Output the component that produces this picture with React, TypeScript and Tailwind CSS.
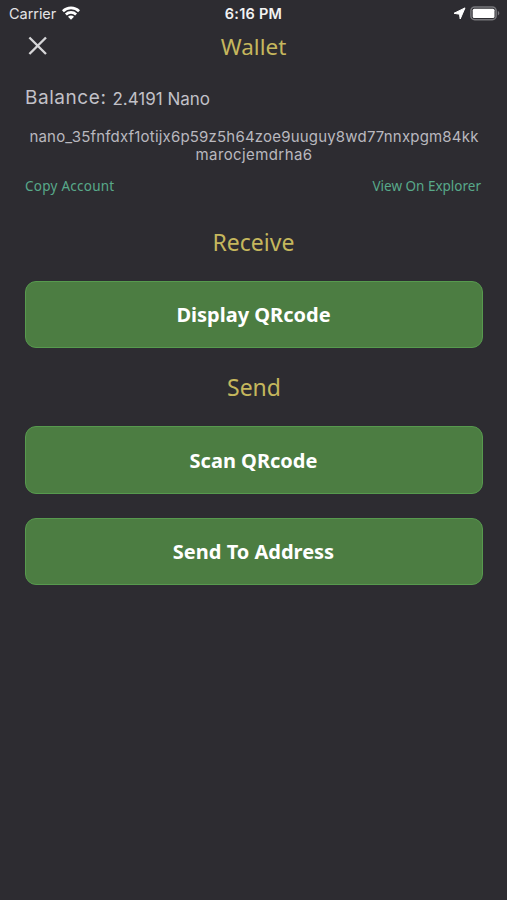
import { useState } from "react";

interface Account {
  balance: string;
  addressLines: string[];
}

const account: Account = {
  balance: "2.4191 Nano",
  addressLines: [
    "nano_35fnfdxf1otijx6p59z5h64zoe9uuguy8wd77nnxpgm84kk",
    "marocjemdrha6",
  ],
};

function StatusBar() {
  return (
    <div className="grid h-7 grid-cols-3 items-center pl-[9px] pr-[7px] font-['Inter',sans-serif] text-[14.5px] leading-7 text-[#e4e4e6]">
      <div className="flex items-center gap-[6px]">
        <span className="tracking-[-0.05px]">Carrier</span>
        <svg className="-mt-[2px]" width="18" height="14" viewBox="0 0 18 14" fill="none" stroke="#fff" strokeWidth="2.7">
          <path d="M.9 5.2a11.5 11.5 0 0 1 16.2 0" />
          <path d="M3.9 8.5a7.3 7.3 0 0 1 10.2 0" />
          <path d="M9 13.8 6 10.8a4.2 4.2 0 0 1 6 0Z" fill="#fff" stroke="none" />
        </svg>
      </div>
      <span className="-ml-[2px] text-center font-semibold tracking-[0.25px] text-[#f2f2f3]">6:16 PM</span>
      <div className="flex items-center justify-end gap-1">
        <svg className="-mt-px" width="13" height="13" viewBox="0 0 13 13" fill="#fff" stroke="#fff" strokeWidth="1" strokeLinejoin="round">
          <path d="M12 .9 7.2 12 6.5 7.2 1 6.3Z" />
        </svg>
        <svg className="-mt-[2px]" width="30" height="15" viewBox="0 0 30 15" fill="none">
          <rect x=".9" y=".9" width="25.2" height="12.8" rx="3.8" stroke="#77777b" strokeWidth="1.5" />
          <rect x="2.7" y="2.7" width="21.8" height="9.2" rx="1.5" fill="#fff" />
          <path d="M27.8 5.1c2 .7 2 3.7 0 4.4Z" fill="#77777b" />
        </svg>
      </div>
    </div>
  );
}

function SectionTitle({ children }: { children: string }) {
  return (
    <h2 className="text-center font-['Noto_Sans',sans-serif] text-[23px] leading-[31px] text-[#c5b75d]">
      {children}
    </h2>
  );
}

function ActionButton({ label }: { label: string }) {
  return (
    <button className="h-[67.5px] w-full rounded-[11px] border border-[#579a4e] bg-[#4c7d42] pt-[2px] pr-px font-['Noto_Sans',sans-serif] text-[20px] font-bold text-white">
      {label}
    </button>
  );
}

export default function App() {
  const [copied, setCopied] = useState(false);

  const handleCopy = () => {
    navigator.clipboard?.writeText(account.addressLines.join(""));
    setCopied(true);
  };

  return (
    <div className="min-h-screen bg-[#2d2c31]">
      <StatusBar />

      <header className="grid h-9 grid-cols-[24px_1fr_24px] items-center px-[26px]">
        <button aria-label="Close">
          <svg width="24" height="24" viewBox="0 0 24 24" stroke="#d6d6d8" strokeWidth="2.4">
            <path d="M3.4 3.5 20 20M20 3.5 3.4 20" />
          </svg>
        </button>
        <h1 className="pt-[2px] text-center font-['Noto_Sans',sans-serif] text-[22.5px] leading-8 text-[#c5b75d]">
          Wallet
        </h1>
      </header>

      <main className="pl-[25px] pr-6">
        {/* Balance */}
        <div className="flex items-end gap-[6px] pt-5 font-['Inter',sans-serif] text-[#c2c1c8]">
          <span className="text-[19px] leading-7 tracking-[0.55px]">Balance:</span>
          <span className="text-[17px] leading-[26px]">{account.balance}</span>
        </div>

        <div className="mt-4 flex flex-col items-center font-['Inter',sans-serif] text-[15px] leading-[18px] tracking-[0.19px] text-[#b9b8bf]">
          {account.addressLines.map((line) => (
            <span key={line} className="whitespace-nowrap last:tracking-[0.4px]">{line}</span>
          ))}
        </div>

        <div className="mt-3 flex justify-between pr-[2px] font-['Noto_Sans',sans-serif] text-[13.5px] leading-5 text-[#58a98a]">
          <button className="tracking-[0.25px]" onClick={handleCopy}>
            {copied ? "Copied" : "Copy Account"}
          </button>
          <button>View On Explorer</button>
        </div>

        {/* Receive */}
        <section className="flex flex-col gap-[23px] pr-px pt-[30.5px] [&>button]:w-[458px]">
          <SectionTitle>Receive</SectionTitle>
          <ActionButton label="Display QRcode" />
        </section>

        {/* Send */}
        <section className="flex flex-col pt-6">
          <SectionTitle>Send</SectionTitle>
          <div className="flex flex-col gap-6 pt-[23px]">
            <ActionButton label="Scan QRcode" />
            <ActionButton label="Send To Address" />
          </div>
        </section>
      </main>
    </div>
  );
}
